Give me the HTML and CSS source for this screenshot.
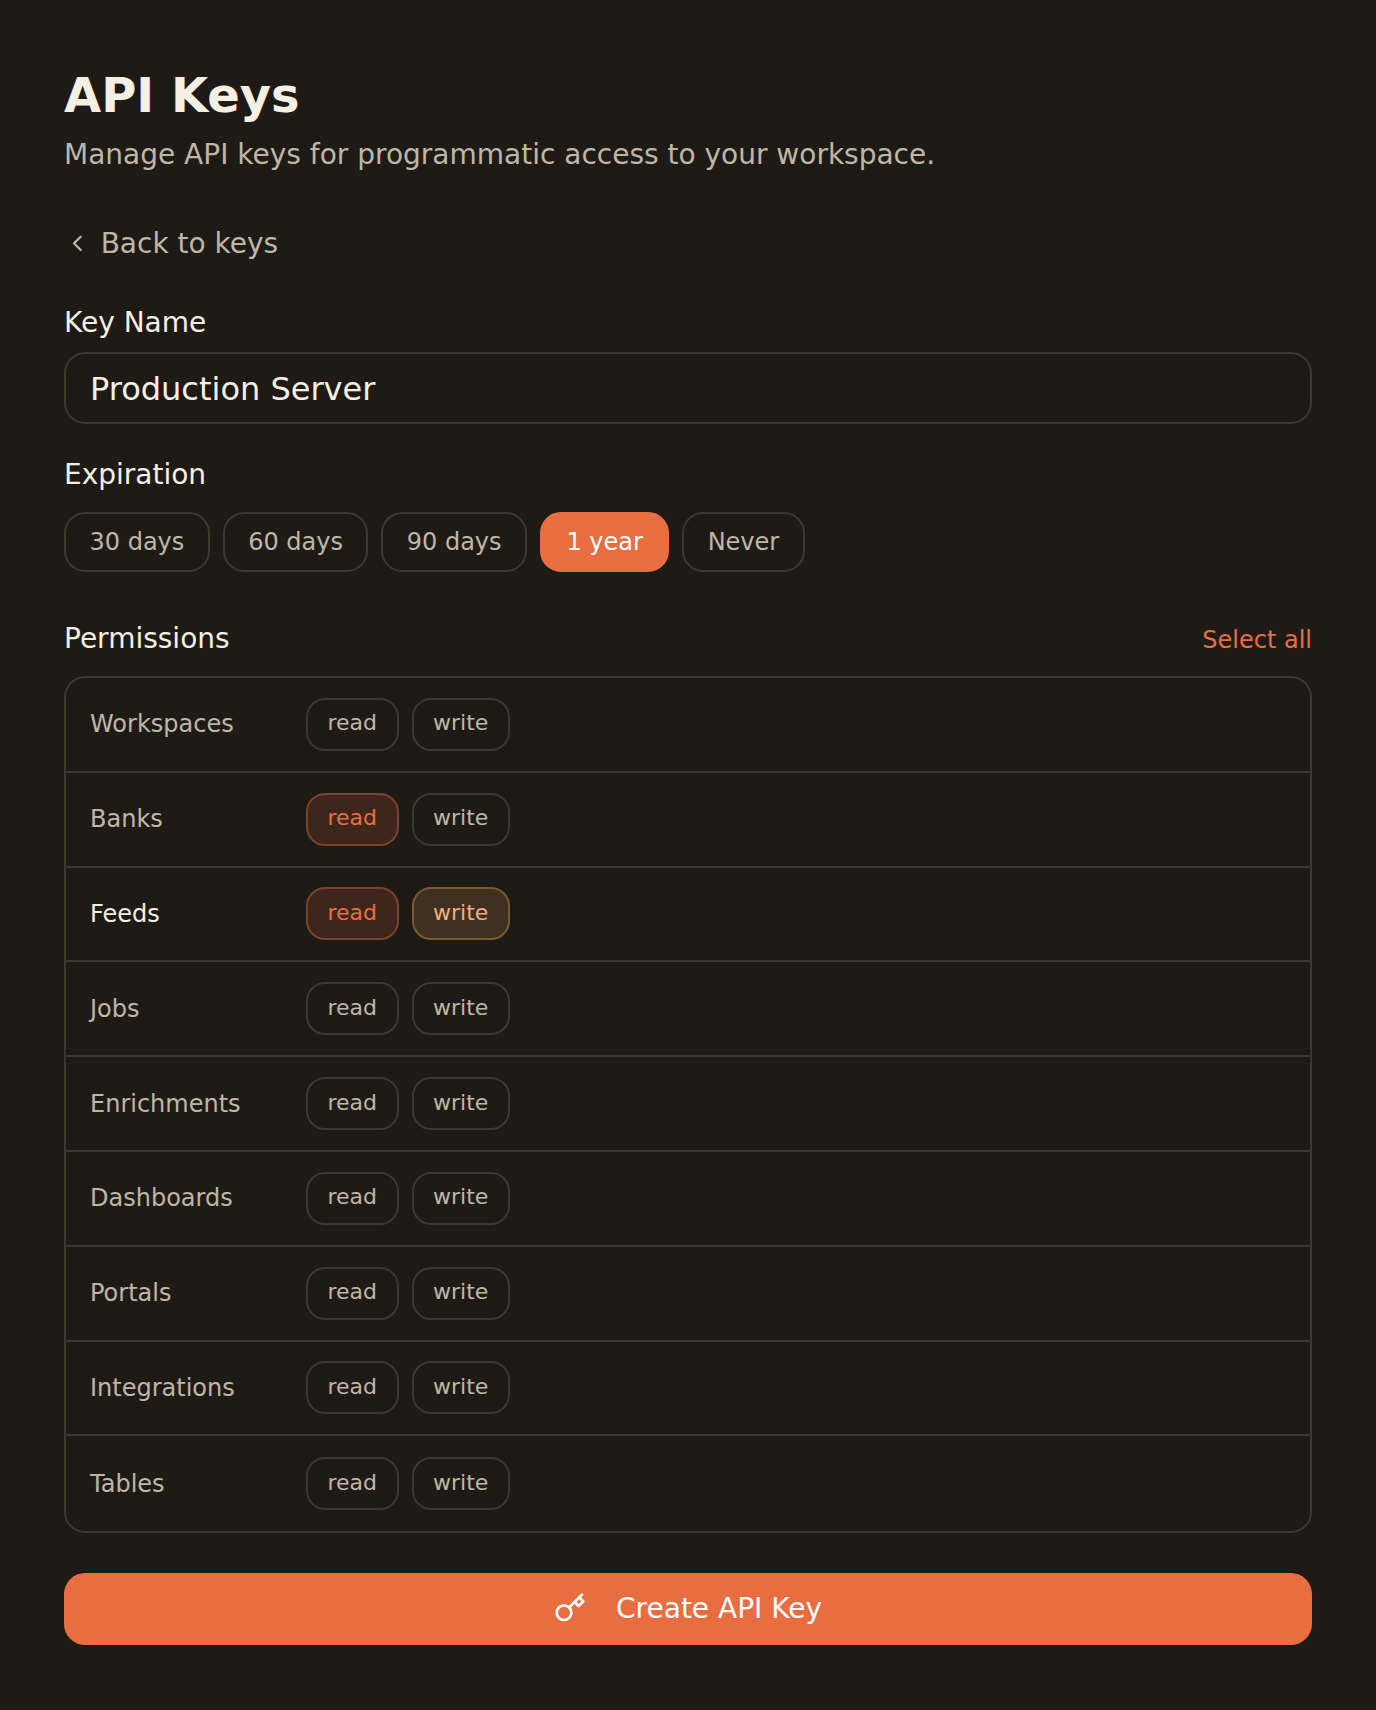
FILE: index.html
```html
<!DOCTYPE html>
<html lang="en">
<head>
<meta charset="utf-8">
<title>API Keys</title>
<link rel="stylesheet" href="styles.css">
</head>
<body>
<main class="page">
  <h1 class="title">API Keys</h1>
  <p class="subtitle">Manage API keys for programmatic access to your workspace.</p>
  <a class="back" href="#">
    <svg class="back-icon" viewBox="0 0 24 24" fill="none" stroke="currentColor" stroke-width="2" stroke-linecap="round" stroke-linejoin="round"><path d="m15 18-6-6 6-6"/></svg>
    <span>Back to keys</span>
  </a>
  <label class="label" for="name">Key Name</label>
  <input class="input" id="name" type="text" value="Production Server">
  <div class="label label-exp">Expiration</div>
  <div class="pills">
    <button class="pill">30 days</button>
    <button class="pill">60 days</button>
    <button class="pill">90 days</button>
    <button class="pill pill-on">1 year</button>
    <button class="pill">Never</button>
  </div>
  <div class="perm-head">
    <div class="label label-perm">Permissions</div>
    <a class="select-all" href="#">Select all</a>
  </div>
  <div class="table">
    <div class="row"><span class="res">Workspaces</span><div class="chips"><button class="chip">read</button><button class="chip">write</button></div></div>
    <div class="row"><span class="res">Banks</span><div class="chips"><button class="chip chip-read">read</button><button class="chip">write</button></div></div>
    <div class="row"><span class="res res-on">Feeds</span><div class="chips"><button class="chip chip-read">read</button><button class="chip chip-write">write</button></div></div>
    <div class="row"><span class="res">Jobs</span><div class="chips"><button class="chip">read</button><button class="chip">write</button></div></div>
    <div class="row"><span class="res">Enrichments</span><div class="chips"><button class="chip">read</button><button class="chip">write</button></div></div>
    <div class="row"><span class="res">Dashboards</span><div class="chips"><button class="chip">read</button><button class="chip">write</button></div></div>
    <div class="row"><span class="res">Portals</span><div class="chips"><button class="chip">read</button><button class="chip">write</button></div></div>
    <div class="row"><span class="res">Integrations</span><div class="chips"><button class="chip">read</button><button class="chip">write</button></div></div>
    <div class="row"><span class="res">Tables</span><div class="chips"><button class="chip">read</button><button class="chip">write</button></div></div>
  </div>
  <button class="create">
    <svg class="key-icon" viewBox="0 0 24 24" fill="none" stroke="currentColor" stroke-width="2" stroke-linecap="round" stroke-linejoin="round"><circle cx="7.5" cy="15.5" r="5.5"/><path d="m21 2-9.6 9.6"/><path d="m15.5 7.5 3 3L22 7l-3-3"/></svg>
    <span>Create API Key</span>
  </button>
</main>
</body>
</html>
```
FILE: styles.css
```css
* { box-sizing: border-box; }
html, body { margin: 0; padding: 0; background: #1e1b17; }
body { font-family: "DejaVu Sans", sans-serif; }
.page { padding: 64px; display: flex; flex-direction: column; min-height: 1710px; }
.title { margin: 0; font-size: 48px; line-height: 62px; font-weight: 700; color: #f5efe4; }
.subtitle { margin: 9px 0 0; font-size: 28px; line-height: 40px; color: #bfb6a6; }
.back { margin-top: 48.5px; display: flex; align-items: center; gap: 10px; font-size: 28px; line-height: 40px; color: #bfb6a6; text-decoration: none; }
.back-icon { width: 26.67px; height: 26.67px; }
.label { font-size: 28px; line-height: 40px; color: #f5efe4; }
.back + .label { margin-top: 39.5px; }
.input { margin-top: 8.5px; width: 100%; height: 72px; padding: 2px 24px 0; border: 2px solid #3f382e; border-radius: 21px; background: transparent; color: #f5efe4; font: 32px "DejaVu Sans", sans-serif; outline: none; }
.label-exp { margin-top: 31px; }
.pills { margin-top: 17px; display: flex; gap: 12.8px; }
.pill { height: 60px; padding: 0 23.5px; border: 2px solid #3f382e; border-radius: 21px; background: transparent; color: #bfb6a6; font: 24px "DejaVu Sans", sans-serif; }
.pill-on { padding: 0 24.5px; background: #e86e42; border-color: #e86e42; color: #fff; }
.perm-head { margin-top: 47px; display: flex; justify-content: space-between; align-items: center; }
.select-all { padding-top: 2px; font-size: 24px; color: #e86e42; text-decoration: none; }
.table { margin-top: 17.5px; border: 2px solid #3f382e; border-radius: 21px; }
.row { height: 94.8px; padding: 0 24px; display: flex; align-items: center; border-bottom: 2px solid #3f382e; }
.row:last-child { border-bottom: 0; }
.res { width: 216px; font-size: 24px; color: #bfb6a6; }
.res-on { color: #f5efe4; }
.chips { display: flex; gap: 13px; }
.chip { height: 53px; padding: 0 19.5px 3px; border: 2px solid #3f382e; border-radius: 19px; background: transparent; color: #bfb6a6; font: 22px "DejaVu Sans", sans-serif; }
.chip-read { background: #3f261c; border-color: #7a432b; color: #e86e42; }
.chip-write { background: #3f3120; border-color: #7a5a2b; color: #f3ac86; }
.create { margin-top: 40px; height: 72px; padding: 0 0 2px; border: 0; border-radius: 21px; background: #e86e42; color: #fff; font: 28px "DejaVu Sans", sans-serif; display: flex; align-items: center; justify-content: center; gap: 30px; }
.key-icon { width: 32px; height: 32px; }
```
